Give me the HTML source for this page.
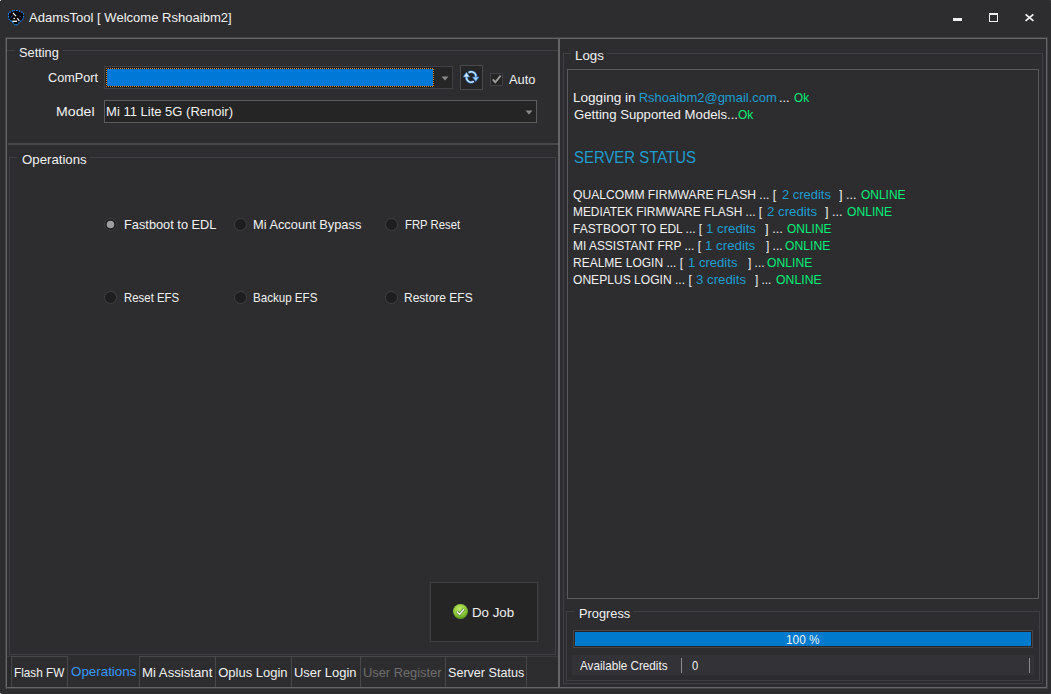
<!DOCTYPE html>
<html><head><meta charset="utf-8"><style>
html,body{margin:0;padding:0;}
body{width:1051px;height:694px;background:#2d2d30;position:relative;overflow:hidden;font-family:"Liberation Sans", sans-serif;}
div{position:absolute;}
.t{white-space:pre;transform-origin:0 0;}
</style></head><body>
<div style="position:absolute;left:953px;top:18px;width:9px;height:3px;background:#f0f0f0;"></div>
<div style="position:absolute;left:989px;top:13px;width:9px;height:9px;box-sizing:border-box;border:1px solid #f0f0f0;border-top-width:2px;"></div>
<div style="position:absolute;left:5px;top:37px;width:1043px;height:652px;box-sizing:border-box;border:1px solid #434347;"></div>
<div style="position:absolute;left:6px;top:38px;width:1041px;height:650px;box-sizing:border-box;border:1px solid #656568;"></div>
<div style="position:absolute;left:558px;top:38px;width:2px;height:650px;background:#656568;"></div>
<div style="position:absolute;left:7px;top:50px;width:8px;height:1px;background:#3f3f46;"></div>
<div style="position:absolute;left:63px;top:50px;width:495px;height:1px;background:#3f3f46;"></div>
<div style="position:absolute;left:104px;top:66px;width:349px;height:23px;background:#252526;box-sizing:border-box;border:1px solid #3f3f46;"></div>
<div style="position:absolute;left:106px;top:68px;width:328px;height:1px;background:repeating-linear-gradient(90deg,#ff8c1a 0 1px,#000 1px 2px);"></div>
<div style="position:absolute;left:106px;top:86px;width:328px;height:1px;background:repeating-linear-gradient(90deg,#ff8c1a 0 1px,#000 1px 2px);"></div>
<div style="position:absolute;left:106px;top:68px;width:1px;height:19px;background:repeating-linear-gradient(180deg,#ff8c1a 0 1px,#000 1px 2px);"></div>
<div style="position:absolute;left:433px;top:68px;width:1px;height:19px;background:repeating-linear-gradient(180deg,#000 0 1px,#ff8c1a 1px 2px);"></div>
<div style="position:absolute;left:107px;top:69px;width:326px;height:17px;background:#0078d7;"></div>
<div style="position:absolute;left:460px;top:65px;width:23px;height:25px;background:#252526;box-sizing:border-box;border:1px solid #4a4a4e;"></div>
<div style="position:absolute;left:490px;top:73px;width:13px;height:13px;background:#252526;box-sizing:border-box;border:1px solid #3f3f46;"></div>
<div style="position:absolute;left:104px;top:100px;width:433px;height:23px;background:#252526;box-sizing:border-box;border:1px solid #5c5c5f;"></div>
<div style="position:absolute;left:8px;top:143px;width:550px;height:2px;background:#48484c;"></div>
<div style="position:absolute;left:9px;top:157px;width:1px;height:498px;background:#3f3f46;"></div>
<div style="position:absolute;left:9px;top:157px;width:8px;height:1px;background:#3f3f46;"></div>
<div style="position:absolute;left:90px;top:157px;width:466px;height:1px;background:#3f3f46;"></div>
<div style="position:absolute;left:555px;top:157px;width:1px;height:498px;background:#3f3f46;"></div>
<div style="position:absolute;left:9px;top:654px;width:547px;height:1px;background:#3f3f46;"></div>
<div style="position:absolute;left:430px;top:582px;width:108px;height:60px;background:#252526;box-sizing:border-box;border:1px solid #3f3f46;"></div>
<div style="position:absolute;left:7px;top:656px;width:551px;height:1px;background:#3a3a3e;"></div>
<div style="position:absolute;left:7px;top:657px;width:4px;height:30px;background:#2a2a2d;"></div>
<div style="position:absolute;left:11px;top:656px;width:57px;height:1px;background:#48484b;"></div>
<div style="position:absolute;left:11px;top:656px;width:1px;height:31px;background:#48484b;"></div>
<div style="position:absolute;left:67px;top:656px;width:1px;height:31px;background:#48484b;"></div>
<div style="position:absolute;left:68px;top:656px;width:71px;height:1px;background:#2d2d30;"></div>
<div style="position:absolute;left:139px;top:656px;width:388px;height:1px;background:#48484b;"></div>
<div style="position:absolute;left:139px;top:656px;width:1px;height:31px;background:#48484b;"></div>
<div style="position:absolute;left:215px;top:656px;width:1px;height:31px;background:#48484b;"></div>
<div style="position:absolute;left:291px;top:656px;width:1px;height:31px;background:#48484b;"></div>
<div style="position:absolute;left:360px;top:656px;width:1px;height:31px;background:#48484b;"></div>
<div style="position:absolute;left:445px;top:656px;width:1px;height:31px;background:#48484b;"></div>
<div style="position:absolute;left:526px;top:656px;width:1px;height:31px;background:#48484b;"></div>
<div style="position:absolute;left:563px;top:53px;width:1px;height:631px;background:#3f3f46;"></div>
<div style="position:absolute;left:563px;top:53px;width:8px;height:1px;background:#3f3f46;"></div>
<div style="position:absolute;left:607px;top:53px;width:436px;height:1px;background:#3f3f46;"></div>
<div style="position:absolute;left:1042px;top:53px;width:1px;height:631px;background:#3f3f46;"></div>
<div style="position:absolute;left:563px;top:683px;width:480px;height:1px;background:#3f3f46;"></div>
<div style="position:absolute;left:567px;top:69px;width:472px;height:530px;box-sizing:border-box;border:1px solid #5a5a5d;"></div>
<div style="position:absolute;left:566px;top:611px;width:1px;height:70px;background:#3f3f46;"></div>
<div style="position:absolute;left:566px;top:611px;width:8px;height:1px;background:#3f3f46;"></div>
<div style="position:absolute;left:633px;top:611px;width:407px;height:1px;background:#3f3f46;"></div>
<div style="position:absolute;left:1039px;top:611px;width:1px;height:70px;background:#3f3f46;"></div>
<div style="position:absolute;left:566px;top:680px;width:474px;height:1px;background:#3f3f46;"></div>
<div style="position:absolute;left:573px;top:630px;width:460px;height:18px;box-sizing:border-box;border:1px solid #464649;"></div>
<div style="position:absolute;left:574px;top:631px;width:458px;height:16px;box-sizing:border-box;border:1px solid #2a2424;"></div>
<div style="position:absolute;left:575px;top:632px;width:456px;height:14px;background:#007acc;"></div>
<div style="position:absolute;left:572px;top:655px;width:462px;height:20px;background:#333337;"></div>
<div style="position:absolute;left:681px;top:658px;width:1px;height:15px;background:#8a8a8a;"></div>
<div style="position:absolute;left:1029px;top:658px;width:1px;height:15px;background:#8a8a8a;"></div>
<div style="position:absolute;left:0px;top:0px;width:1px;height:1px;background:#d8d8d8;"></div>
<div style="position:absolute;left:0px;top:693px;width:1px;height:1px;background:#c8c8c8;"></div>
<div style="position:absolute;left:1050px;top:0px;width:1px;height:1px;background:#4a4a4c;"></div>
<div style="position:absolute;left:1050px;top:693px;width:1px;height:1px;background:#4a4a4e;"></div>
<svg style="position:absolute;left:8px;top:10px" width="16" height="16" viewBox="0 0 16 16">
<path d="M5.5,0.5 L10.5,0.5 L15.5,3 L15.5,8.5 L8,15.6 L0.5,8.5 L0.5,3 Z" fill="#050505" stroke="#1a8cff" stroke-width="1.1" stroke-dasharray="1.6,1.1"/>
<path d="M5,3 L8,6.2" stroke="#f4f4f4" stroke-width="1.2"/>
<path d="M4.3,11.3 L9,11.3" stroke="#f4f4f4" stroke-width="1.4"/>
<path d="M9.4,8.2 L11.3,11" stroke="#f4f4f4" stroke-width="1.2"/>
<circle cx="6.2" cy="8.5" r="0.8" fill="#fff"/>
<path d="M4.5,5.5 L3,7.5 M11,5.5 L13,7.5" stroke="#3a4a70" stroke-width="1"/>
</svg>
<svg style="position:absolute;left:1024px;top:13px" width="12" height="10" viewBox="0 0 12 10"><path d="M1.6,1.3 L9.4,7.9 M9.4,1.3 L1.6,7.9" stroke="#f0f0f0" stroke-width="1.75"/></svg>
<svg style="position:absolute;left:440.5px;top:76px" width="9" height="5" viewBox="0 0 9 5"><path d="M0.5,0.5 L7.5,0.5 L4,4.5 Z" fill="#8a8a8a"/></svg>
<svg style="position:absolute;left:461px;top:66px" width="21" height="23" viewBox="0 0 21 23">
<g fill="none" stroke="#2f74c8" stroke-width="2.6">
<path d="M7.6,6.6 A4.7,4.7 0 0 1 14.9,10.8"/>
<path d="M12.8,15.4 A4.7,4.7 0 0 1 5.5,11"/>
</g>
<g fill="none" stroke="#c4e6ff" stroke-width="1.3">
<path d="M7.6,6.6 A4.7,4.7 0 0 1 14.9,10.8"/>
<path d="M12.8,15.4 A4.7,4.7 0 0 1 5.5,11"/>
</g>
<path d="M11.5,11 L18,11 L14.75,15.6 Z" fill="#9ad2fa" stroke="#2f74c8" stroke-width="0.6"/>
<path d="M2.2,11 L8.7,11 L5.45,6.2 Z" fill="#d0ecff" stroke="#2f74c8" stroke-width="0.6"/>
</svg>
<svg style="position:absolute;left:490px;top:73px" width="13" height="13" viewBox="0 0 13 13"><path d="M2.8,6.3 L5.3,9.3 L10.6,2.6" fill="none" stroke="#9c9c9c" stroke-width="1.9"/></svg>
<svg style="position:absolute;left:524.5px;top:110px" width="9" height="5" viewBox="0 0 9 5"><path d="M0.5,0.5 L7.5,0.5 L4,4.5 Z" fill="#8a8a8a"/></svg>
<svg style="position:absolute;left:104.0px;top:218.0px" width="13" height="13" viewBox="0 0 13 13"><circle cx="6.5" cy="6.5" r="6" fill="#1e1e1e" stroke="#404044" stroke-width="1"/><circle cx="6.5" cy="6.5" r="3.8" fill="#9d9d9d"/></svg>
<svg style="position:absolute;left:234.0px;top:218.0px" width="13" height="13" viewBox="0 0 13 13"><circle cx="6.5" cy="6.5" r="6" fill="#1e1e1e" stroke="#404044" stroke-width="1"/></svg>
<svg style="position:absolute;left:385.0px;top:218.0px" width="13" height="13" viewBox="0 0 13 13"><circle cx="6.5" cy="6.5" r="6" fill="#1e1e1e" stroke="#404044" stroke-width="1"/></svg>
<svg style="position:absolute;left:104.0px;top:291.0px" width="13" height="13" viewBox="0 0 13 13"><circle cx="6.5" cy="6.5" r="6" fill="#1e1e1e" stroke="#404044" stroke-width="1"/></svg>
<svg style="position:absolute;left:234.0px;top:291.0px" width="13" height="13" viewBox="0 0 13 13"><circle cx="6.5" cy="6.5" r="6" fill="#1e1e1e" stroke="#404044" stroke-width="1"/></svg>
<svg style="position:absolute;left:385.0px;top:291.0px" width="13" height="13" viewBox="0 0 13 13"><circle cx="6.5" cy="6.5" r="6" fill="#1e1e1e" stroke="#404044" stroke-width="1"/></svg>
<svg style="position:absolute;left:452px;top:603px" width="17" height="17" viewBox="0 0 17 17">
<defs><radialGradient id="gg" cx="45%" cy="35%" r="60%"><stop offset="0" stop-color="#c0ea66"/><stop offset="0.7" stop-color="#8cc83a"/><stop offset="1" stop-color="#5e9a22"/></radialGradient></defs>
<circle cx="8.5" cy="8.5" r="7.5" fill="url(#gg)"/>
<path d="M4.8,8.6 L7.6,11.3 L12,6.2" fill="none" stroke="#3a6a14" stroke-width="2.8"/>
<path d="M4.8,8.6 L7.6,11.3 L12,6.2" fill="none" stroke="#f4f4f4" stroke-width="1.5"/>
</svg>
<div class="t" style="left:29.00px;top:10.00px;font-size:13px;line-height:16px;color:#f1f1f1;transform:scaleX(1.0027);">AdamsTool [ Welcome Rshoaibm2]</div>
<div class="t" style="left:19.00px;top:45.00px;font-size:13px;line-height:16px;color:#f1f1f1;transform:scaleX(0.9841);">Setting</div>
<div class="t" style="left:48.10px;top:70.00px;font-size:13px;line-height:16px;color:#f1f1f1;transform:scaleX(0.9734);">ComPort</div>
<div class="t" style="left:508.70px;top:72.00px;font-size:13px;line-height:16px;color:#f1f1f1;transform:scaleX(0.9886);">Auto</div>
<div class="t" style="left:56.11px;top:104.00px;font-size:13px;line-height:16px;color:#f1f1f1;transform:scaleX(1.0893);">Model</div>
<div class="t" style="left:106.10px;top:104.00px;font-size:13px;line-height:16px;color:#f1f1f1;">Mi 11 Lite 5G (Renoir)</div>
<div class="t" style="left:22.10px;top:152.00px;font-size:13px;line-height:16px;color:#f1f1f1;transform:scaleX(1.0174);">Operations</div>
<div class="t" style="left:123.82px;top:217.00px;font-size:13px;line-height:16px;color:#f1f1f1;transform:scaleX(0.9840);">Fastboot to EDL</div>
<div class="t" style="left:253.01px;top:217.00px;font-size:13px;line-height:16px;color:#f1f1f1;transform:scaleX(0.9860);">Mi Account Bypass</div>
<div class="t" style="left:404.53px;top:217.00px;font-size:13px;line-height:16px;color:#f1f1f1;transform:scaleX(0.8692);">FRP Reset</div>
<div class="t" style="left:123.62px;top:290.00px;font-size:13px;line-height:16px;color:#f1f1f1;transform:scaleX(0.8782);">Reset EFS</div>
<div class="t" style="left:253.11px;top:290.00px;font-size:13px;line-height:16px;color:#f1f1f1;transform:scaleX(0.8914);">Backup EFS</div>
<div class="t" style="left:404.08px;top:290.00px;font-size:13px;line-height:16px;color:#f1f1f1;transform:scaleX(0.9223);">Restore EFS</div>
<div class="t" style="left:471.88px;top:605.00px;font-size:13px;line-height:16px;color:#f1f1f1;transform:scaleX(1.0237);">Do Job</div>
<div class="t" style="left:13.99px;top:665.00px;font-size:13px;line-height:16px;color:#f1f1f1;transform:scaleX(0.9054);">Flash FW</div>
<div class="t" style="left:71.10px;top:664.00px;font-size:13px;line-height:16px;color:#3399ff;transform:scaleX(1.0276);">Operations</div>
<div class="t" style="left:141.59px;top:665.00px;font-size:13px;line-height:16px;color:#f1f1f1;transform:scaleX(1.0136);">Mi Assistant</div>
<div class="t" style="left:218.20px;top:665.00px;font-size:13px;line-height:16px;color:#f1f1f1;">Oplus Login</div>
<div class="t" style="left:293.91px;top:665.00px;font-size:13px;line-height:16px;color:#f1f1f1;transform:scaleX(0.9932);">User Login</div>
<div class="t" style="left:363.31px;top:665.00px;font-size:13px;line-height:16px;color:#6d6d6d;transform:scaleX(0.9869);">User Register</div>
<div class="t" style="left:447.90px;top:665.00px;font-size:13px;line-height:16px;color:#f1f1f1;transform:scaleX(0.9679);">Server Status</div>
<div class="t" style="left:574.57px;top:48.00px;font-size:13px;line-height:16px;color:#f1f1f1;transform:scaleX(1.0263);">Logs</div>
<div class="t" style="left:573.06px;top:90.00px;font-size:13px;line-height:16px;color:#f1f1f1;transform:scaleX(1.0431);">Logging in</div>
<div class="t" style="left:638.70px;top:90.00px;font-size:13px;line-height:16px;color:#1e9dcf;">Rshoaibm2@gmail.com</div>
<div class="t" style="left:779.02px;top:90.00px;font-size:13px;line-height:16px;color:#f1f1f1;transform:scaleX(0.9758);">...</div>
<div class="t" style="left:794.00px;top:90.00px;font-size:13px;line-height:16px;color:#00ee77;transform:scaleX(0.9068);">Ok</div>
<div class="t" style="left:574.10px;top:107.00px;font-size:13px;line-height:16px;color:#f1f1f1;transform:scaleX(1.0133);">Getting Supported Models...</div>
<div class="t" style="left:738.40px;top:107.00px;font-size:13px;line-height:16px;color:#00ee77;transform:scaleX(0.9244);">Ok</div>
<div class="t" style="left:573.90px;top:147.00px;font-size:17px;line-height:21px;color:#1e9dcf;transform:scaleX(0.8778);">SERVER STATUS</div>
<div class="t" style="left:572.90px;top:187.00px;font-size:13px;line-height:16px;color:#f1f1f1;transform:scaleX(0.9338);">QUALCOMM FIRMWARE FLASH ... [</div>
<div class="t" style="left:781.50px;top:187.00px;font-size:13px;line-height:16px;color:#1e9dcf;transform:scaleX(0.9956);">2 credits</div>
<div class="t" style="left:839.00px;top:187.00px;font-size:13px;line-height:16px;color:#f1f1f1;transform:scaleX(0.9744);">] ...</div>
<div class="t" style="left:860.80px;top:187.00px;font-size:13px;line-height:16px;color:#00ee77;transform:scaleX(0.9195);">ONLINE</div>
<div class="t" style="left:572.98px;top:204.00px;font-size:13px;line-height:16px;color:#f1f1f1;transform:scaleX(0.9157);">MEDIATEK FIRMWARE FLASH ... [</div>
<div class="t" style="left:767.00px;top:204.00px;font-size:13px;line-height:16px;color:#1e9dcf;transform:scaleX(1.0202);">2 credits</div>
<div class="t" style="left:825.00px;top:204.00px;font-size:13px;line-height:16px;color:#f1f1f1;transform:scaleX(0.9698);">] ...</div>
<div class="t" style="left:846.80px;top:204.00px;font-size:13px;line-height:16px;color:#00ee77;transform:scaleX(0.9319);">ONLINE</div>
<div class="t" style="left:572.98px;top:221.00px;font-size:13px;line-height:16px;color:#f1f1f1;transform:scaleX(0.9202);">FASTBOOT TO EDL ... [</div>
<div class="t" style="left:706.40px;top:221.00px;font-size:13px;line-height:16px;color:#1e9dcf;transform:scaleX(1.0167);">1 credits</div>
<div class="t" style="left:765.00px;top:221.00px;font-size:13px;line-height:16px;color:#f1f1f1;transform:scaleX(0.9867);">] ...</div>
<div class="t" style="left:787.10px;top:221.00px;font-size:13px;line-height:16px;color:#00ee77;transform:scaleX(0.9195);">ONLINE</div>
<div class="t" style="left:572.98px;top:238.00px;font-size:13px;line-height:16px;color:#f1f1f1;transform:scaleX(0.9186);">MI ASSISTANT FRP ... [</div>
<div class="t" style="left:705.30px;top:238.00px;font-size:13px;line-height:16px;color:#1e9dcf;transform:scaleX(1.0230);">1 credits</div>
<div class="t" style="left:765.60px;top:238.00px;font-size:13px;line-height:16px;color:#f1f1f1;transform:scaleX(0.9126);">] ...</div>
<div class="t" style="left:785.40px;top:238.00px;font-size:13px;line-height:16px;color:#00ee77;transform:scaleX(0.9382);">ONLINE</div>
<div class="t" style="left:572.98px;top:255.00px;font-size:13px;line-height:16px;color:#f1f1f1;transform:scaleX(0.9234);">REALME LOGIN ... [</div>
<div class="t" style="left:688.10px;top:255.00px;font-size:13px;line-height:16px;color:#1e9dcf;transform:scaleX(1.0064);">1 credits</div>
<div class="t" style="left:747.60px;top:255.00px;font-size:13px;line-height:16px;color:#f1f1f1;transform:scaleX(0.9170);">] ...</div>
<div class="t" style="left:767.40px;top:255.00px;font-size:13px;line-height:16px;color:#00ee77;transform:scaleX(0.9382);">ONLINE</div>
<div class="t" style="left:572.90px;top:272.00px;font-size:13px;line-height:16px;color:#f1f1f1;transform:scaleX(0.9286);">ONEPLUS LOGIN ... [</div>
<div class="t" style="left:695.70px;top:272.00px;font-size:13px;line-height:16px;color:#1e9dcf;transform:scaleX(1.0182);">3 credits</div>
<div class="t" style="left:755.00px;top:272.00px;font-size:13px;line-height:16px;color:#f1f1f1;transform:scaleX(0.9000);">] ...</div>
<div class="t" style="left:775.50px;top:272.00px;font-size:13px;line-height:16px;color:#00ee77;transform:scaleX(0.9444);">ONLINE</div>
<div class="t" style="left:578.82px;top:606.00px;font-size:13px;line-height:16px;color:#f1f1f1;transform:scaleX(0.9841);">Progress</div>
<div class="t" style="left:785.90px;top:632.00px;font-size:13px;line-height:16px;color:#f1f1f1;transform:scaleX(0.9115);">100 %</div>
<div class="t" style="left:579.60px;top:658.00px;font-size:13px;line-height:16px;color:#f1f1f1;transform:scaleX(0.8997);">Available Credits</div>
<div class="t" style="left:692.00px;top:658.00px;font-size:13px;line-height:16px;color:#f1f1f1;transform:scaleX(0.8571);">0</div>
</body></html>
